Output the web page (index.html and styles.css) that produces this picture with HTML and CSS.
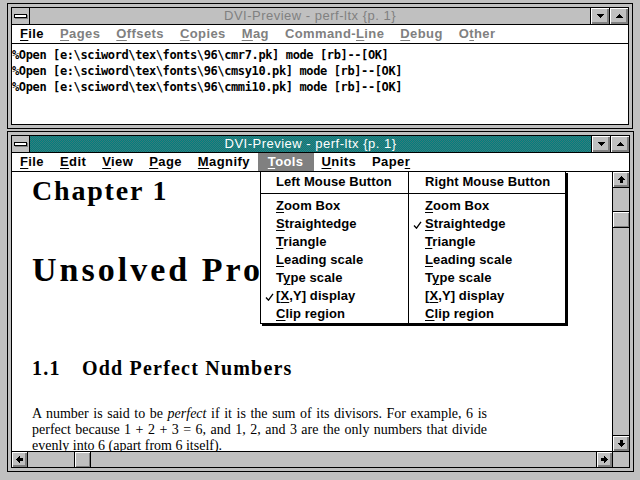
FILE: index.html
```html
<!DOCTYPE html>
<html>
<head>
<meta charset="utf-8">
<link rel="stylesheet" href="styles.css">
</head>
<body>
<div class="desktop">
  <div class="win inactive">
    <div class="frame">
      <div class="titlebar">
        <div class="sysmenu"><span class="sysbar"></span></div>
        <div class="title">DVI-Preview - perf-ltx {p. 1}</div>
        <div class="tbtn"><svg width="7" height="4" viewBox="0 0 7 4"><path d="M0 0h7v1H6v1H5v1H4v1H3V3H2V2H1V1H0z"/></svg></div>
        <div class="tbtn"><svg class="flip" width="7" height="4" viewBox="0 0 7 4"><path d="M0 0h7v1H6v1H5v1H4v1H3V3H2V2H1V1H0z"/></svg></div>
      </div>
      <div class="menubar">
        <span class="mi"><u>F</u>ile</span>
        <span class="mi dis"><u>P</u>ages</span>
        <span class="mi dis"><u>O</u>ffsets</span>
        <span class="mi dis"><u>C</u>opies</span>
        <span class="mi dis"><u>M</u>ag</span>
        <span class="mi dis">Command-<u>L</u>ine</span>
        <span class="mi dis"><u>D</u>ebug</span>
        <span class="mi dis">O<u>t</u>her</span>
      </div>
      <div class="console">%Open [e:\sciword\tex\fonts\96\cmr7.pk] mode [rb]--[OK]
%Open [e:\sciword\tex\fonts\96\cmsy10.pk] mode [rb]--[OK]
%Open [e:\sciword\tex\fonts\96\cmmi10.pk] mode [rb]--[OK]</div>
    </div>
  </div>

  <div class="win active">
    <div class="frame">
      <div class="titlebar">
        <div class="sysmenu"><span class="sysbar"></span></div>
        <div class="title">DVI-Preview - perf-ltx {p. 1}</div>
        <div class="tbtn"><svg width="7" height="4" viewBox="0 0 7 4"><path d="M0 0h7v1H6v1H5v1H4v1H3V3H2V2H1V1H0z"/></svg></div>
        <div class="tbtn"><svg class="flip" width="7" height="4" viewBox="0 0 7 4"><path d="M0 0h7v1H6v1H5v1H4v1H3V3H2V2H1V1H0z"/></svg></div>
      </div>
      <div class="menubar">
        <span class="mi"><u>F</u>ile</span>
        <span class="mi"><u>E</u>dit</span>
        <span class="mi"><u>V</u>iew</span>
        <span class="mi"><u>P</u>age</span>
        <span class="mi"><u>M</u>agnify</span>
        <span class="mi sel"><u>T</u>ools</span>
        <span class="mi"><u>U</u>nits</span>
        <span class="mi">Pape<u>r</u></span>

        <div class="dropdown">
          <div class="col left">
            <div class="dh">Left Mouse Button</div>
            <div class="items">
              <div class="it"><u>Z</u>oom Box</div>
              <div class="it"><u>S</u>traightedge</div>
              <div class="it"><u>T</u>riangle</div>
              <div class="it"><u>L</u>eading scale</div>
              <div class="it">T<u>y</u>pe scale</div>
              <div class="it"><svg class="check" width="9" height="8" viewBox="0 0 9 8"><path d="M1 4.5L3.5 7.2L8 0.8"/></svg>[<u>X</u>,Y] display</div>
              <div class="it"><u>C</u>lip region</div>
            </div>
          </div>
          <div class="col right">
            <div class="dh">Right Mouse Button</div>
            <div class="items">
              <div class="it"><u>Z</u>oom Box</div>
              <div class="it"><svg class="check" width="9" height="8" viewBox="0 0 9 8"><path d="M1 4.5L3.5 7.2L8 0.8"/></svg><u>S</u>traightedge</div>
              <div class="it"><u>T</u>riangle</div>
              <div class="it"><u>L</u>eading scale</div>
              <div class="it">T<u>y</u>pe scale</div>
              <div class="it">[<u>X</u>,Y] display</div>
              <div class="it"><u>C</u>lip region</div>
            </div>
          </div>
        </div>
      </div>
      <div class="client">
        <div class="doc">
          <div class="chap">Chapter 1</div>
          <div class="ptitle">Unsolved Problems</div>
          <div class="sec"><span class="secnum">1.1</span><span>Odd Perfect Numbers</span></div>
          <div class="para">
            <span class="ln">A number is said to be <i>perfect</i> if it is the sum of its divisors. For example, 6 is</span>
            <span class="ln">perfect because 1 + 2 + 3 = 6, and 1, 2, and 3 are the only numbers that divide</span>
            <span class="ln last">evenly into 6 (apart from 6 itself).</span>
          </div>
        </div>
        <div class="vscroll">
          <div class="sbtn up"><svg width="7" height="7" viewBox="0 0 7 7"><path d="M3 0h1v1h1v1h1v1h1v1H5v3H2V4H0V3h1V2h1V1h1z"/></svg></div>
          <div class="thumb"></div>
          <div class="sbtn down"><svg class="r180" width="7" height="7" viewBox="0 0 7 7"><path d="M3 0h1v1h1v1h1v1h1v1H5v3H2V4H0V3h1V2h1V1h1z"/></svg></div>
        </div>
        <div class="hscroll">
          <div class="sbtn lft"><svg class="r270" width="7" height="7" viewBox="0 0 7 7"><path d="M3 0h1v1h1v1h1v1h1v1H5v3H2V4H0V3h1V2h1V1h1z"/></svg></div>
          <div class="hthumb"></div>
          <div class="sbtn rgt"><svg class="r90" width="7" height="7" viewBox="0 0 7 7"><path d="M3 0h1v1h1v1h1v1h1v1H5v3H2V4H0V3h1V2h1V1h1z"/></svg></div>
        </div>
        <div class="corner"></div>
      </div>
    </div>
  </div>
</div>
</body>
</html>
```

FILE: styles.css
```css
* { box-sizing: border-box; }
html, body { margin: 0; padding: 0; }
body {
  background: #c0c0c0;
  width: 640px;
  height: 480px;
  overflow: hidden;
  font-family: "Liberation Sans", Arial, sans-serif;
  color: #000;
}
.desktop {
  padding: 3px 0 0 7px;
  display: flex;
  flex-direction: column;
  gap: 2px;
}
.win {
  border: 1px solid #000;
  padding: 3px;
}
.win.inactive {
  width: 626px;
  background:
    linear-gradient(#000, #000) 21px 0 / 1px 100% no-repeat,
    linear-gradient(#000, #000) right 21px top 0 / 1px 100% no-repeat,
    linear-gradient(#000, #000) 0 20px / 100% 1px no-repeat,
    linear-gradient(#000, #000) 0 bottom 20px / 100% 1px no-repeat,
    #c0c0c0;
}
.win.active {
  width: 627px;
  background:
    linear-gradient(#000, #000) 21px 0 / 1px 100% no-repeat,
    linear-gradient(#000, #000) right 21px top 0 / 1px 100% no-repeat,
    linear-gradient(#000, #000) 0 20px / 100% 1px no-repeat,
    linear-gradient(#000, #000) 0 bottom 20px / 100% 1px no-repeat,
    repeating-conic-gradient(#ffff00 0 25%, #ffffff 0 50%) 0 0 / 2px 2px;
}
.frame {
  border: 1px solid #000;
  background: #fff;
}
.titlebar {
  display: flex;
  height: 17px;
  border-bottom: 1px solid #000;
}
.sysmenu {
  width: 18px;
  border-right: 1px solid #000;
  background: #c0c0c0;
  display: flex;
  align-items: center;
  justify-content: center;
}
.sysbar {
  width: 13px;
  height: 4px;
  background: #fff;
  border: 1px solid #000;
  box-shadow: 1px 1px 0 #808080;
}
.title {
  flex: 1;
  text-align: center;
  font-size: 13px;
  letter-spacing: 0.5px;
  line-height: 16px;
}
.inactive .title {
  background: #c0c0c0;
  color: #808080;
}
.active .title {
  background: repeating-conic-gradient(#008080 0 25%, #3a7a7a 0 50%) 0 0 / 2px 2px;
  color: #fff;
}
.tbtn {
  width: 19px;
  border-left: 1px solid #000;
  background: #c0c0c0;
  box-shadow: inset 1px 1px #fff, inset -2px -2px #808080;
  display: flex;
  align-items: center;
  justify-content: center;
}
.tbtn svg { display: block; shape-rendering: crispEdges; }
.flip { transform: rotate(180deg); }
.r180 { transform: rotate(180deg); }
.r90 { transform: rotate(90deg); }
.r270 { transform: rotate(270deg); }

.menubar {
  position: relative;
  display: flex;
  height: 19px;
  border-bottom: 1px solid #000;
  font-size: 13px;
  font-weight: bold;
  letter-spacing: 0.4px;
}
.mi {
  padding: 0 8px;
  line-height: 18px;
  white-space: nowrap;
}
.mi.dis { color: #808080; }
.mi.sel {
  background: #808080;
  color: #fff;
  padding: 0 10px;
}
u {
  text-decoration: underline;
  text-decoration-thickness: 1px;
  text-underline-offset: 2px;
}

.console {
  height: 80px;
  padding-top: 3px;
  font-family: "DejaVu Sans Mono", "Liberation Mono", monospace;
  font-weight: bold;
  font-size: 12px;
  letter-spacing: -0.38px;
  line-height: 16px;
  white-space: pre;
  overflow: hidden;
}

.dropdown {
  position: absolute;
  left: 248px;
  top: 100%;
  z-index: 5;
  display: flex;
  background: #fff;
  border: 1px solid #000;
  box-shadow: 2px 2px 0 #000;
  font-size: 13px;
  font-weight: bold;
  letter-spacing: 0.1px;
  color: #000;
}
.col.left { width: 148px; border-right: 1px solid #000; }
.col.right { width: 156px; }
.dh {
  height: 22px;
  line-height: 20px;
  border-bottom: 1px solid #000;
  padding-left: 15px;
  white-space: nowrap;
}
.col.right .dh { padding-left: 16px; }
.items { padding-top: 3px; }
.it {
  position: relative;
  height: 18px;
  line-height: 18px;
  padding-left: 15px;
  white-space: nowrap;
}
.col.right .it { padding-left: 16px; }
.check {
  position: absolute;
  left: 4px;
  top: 6px;
  fill: none;
  stroke: #000;
  stroke-width: 1.3;
}

.client {
  display: grid;
  grid-template-columns: 1fr 17px;
  grid-template-rows: 279px 16px;
}
.doc {
  overflow: hidden;
  padding: 5px 0 0 20px;
  font-family: "Liberation Serif", "Times New Roman", serif;
  color: #000;
}
.chap {
  font-size: 28px;
  font-weight: bold;
  line-height: 28px;
  letter-spacing: 1.8px;
  white-space: nowrap;
}
.ptitle {
  margin-top: 48px;
  font-size: 34px;
  font-weight: bold;
  line-height: 34px;
  letter-spacing: 3px;
  white-space: nowrap;
}
.sec {
  margin-top: 71px;
  display: flex;
  font-size: 20px;
  font-weight: bold;
  line-height: 20px;
  letter-spacing: 1.2px;
  white-space: nowrap;
}
.secnum { width: 50px; }
.para {
  margin-top: 28px;
  width: 455px;
  font-size: 14px;
  line-height: 16px;
}
.ln {
  display: block;
  text-align: justify;
  text-align-last: justify;
}
.ln.last { text-align-last: left; }

.vscroll {
  display: flex;
  flex-direction: column;
  border-left: 1px solid #000;
  background: #c0c0c0;
}
.sbtn {
  height: 16px;
  background: #c0c0c0;
  box-shadow: inset 1px 1px #fff, inset -2px -2px #808080;
  display: flex;
  align-items: center;
  justify-content: center;
  flex: none;
}
.sbtn svg { display: block; shape-rendering: crispEdges; }
.sbtn.up { border-bottom: 1px solid #000; }
.sbtn.down { margin-top: auto; border-top: 1px solid #000; }
.thumb {
  margin-top: 23px;
  height: 17px;
  flex: none;
  border-top: 1px solid #000;
  border-bottom: 1px solid #000;
  background: #c0c0c0;
  box-shadow: inset 1px 1px #fff, inset -1px -1px #808080;
}
.hscroll {
  display: flex;
  border-top: 1px solid #000;
  background: #c0c0c0;
}
.sbtn.lft { width: 16px; height: 15px; border-right: 1px solid #000; }
.sbtn.rgt { width: 16px; height: 15px; margin-left: auto; border-left: 1px solid #000; }
.hthumb {
  margin-left: 46px;
  width: 17px;
  flex: none;
  border-left: 1px solid #000;
  border-right: 1px solid #000;
  background: #c0c0c0;
  box-shadow: inset 1px 1px #fff, inset -1px -1px #808080;
}
.corner {
  border-top: 1px solid #000;
  border-left: 1px solid #000;
  background: #c0c0c0;
}
```
